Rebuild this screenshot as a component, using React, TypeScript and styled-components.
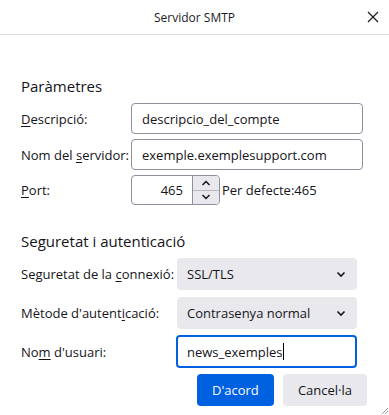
import styled, { createGlobalStyle } from 'styled-components';

const GlobalStyle = createGlobalStyle`
  html, body {
    margin: 0;
    padding: 0;
    background: #ffffff;
  }
  body {
    font-family: 'Open Sans', 'Noto Sans', sans-serif;
    color: #15141a;
  }
`;

const Dialog = styled.div`
  width: 389px;
  height: 415px;
  position: relative;
  overflow: hidden;
  background: #ffffff;
`;

const TitleBar = styled.div`
  height: 34px;
  border-bottom: 1px solid #dcdce0;
  display: flex;
  align-items: center;
  justify-content: center;
  position: relative;
  font-size: 12px;
  color: #1b1b1b;
`;

const CloseButton = styled.div`
  position: absolute;
  right: 8px;
  top: 9px;
  width: 16px;
  height: 16px;
  display: flex;
  align-items: center;
  justify-content: center;
`;

const Body = styled.div`
  padding: 41px 22px 0 21px;
  display: flex;
  flex-direction: column;
`;

const Heading = styled.div`
  font-size: 15px;
  line-height: 20px;
  margin-bottom: 7px;
`;

const Row = styled.div<{ $labelWidth: number; $mt?: number }>`
  display: flex;
  align-items: center;
  margin-top: ${(p) => p.$mt ?? 0}px;
  font-size: 13px;
  & > label {
    width: ${(p) => p.$labelWidth}px;
    flex-shrink: 0;
  }
`;

const TextBox = styled.div<{ $width: number; $focus?: boolean }>`
  box-sizing: border-box;
  width: ${(p) => p.$width}px;
  height: ${(p) => (p.$focus ? 33 : 31)}px;
  border: ${(p) => (p.$focus ? '2px solid #0061e0' : '1px solid #8f8f9d')};
  border-radius: 4px;
  padding-left: ${(p) => (p.$focus ? 9 : 10)}px;
  display: flex;
  align-items: center;
  font-size: 13px;
  background: #fff;
`;

const Caret = styled.span`
  display: inline-block;
  width: 1px;
  height: 17px;
  background: #000;
  margin-left: 1px;
`;

const PortBox = styled.div`
  box-sizing: border-box;
  width: 89px;
  height: 30px;
  border: 1px solid #8f8f9d;
  border-radius: 4px;
  display: flex;
  align-items: stretch;
  overflow: hidden;
`;

const PortValue = styled.div`
  flex: 1;
  display: flex;
  align-items: center;
  justify-content: flex-end;
  padding-right: 9px;
  font-size: 13px;
`;

const Spinner = styled.div`
  width: 26px;
  border-left: 1px solid #8f8f9d;
  display: flex;
  flex-direction: column;
  background: #e9e9ed;
`;

const SpinHalf = styled.div<{ $top?: boolean }>`
  flex: 1;
  display: flex;
  align-items: center;
  justify-content: center;
  border-bottom: ${(p) => (p.$top ? '1px solid #b8b8c0' : 'none')};
`;

const Hint = styled.span`
  margin-left: 2px;
  font-size: 13px;
`;

const Select = styled.div`
  box-sizing: border-box;
  width: 180px;
  height: 32px;
  border-radius: 4px;
  background: #e9e9ed;
  display: flex;
  align-items: center;
  justify-content: space-between;
  padding: 0 11px 0 10px;
  font-size: 13px;
`;

const Buttons = styled.div`
  display: flex;
  justify-content: flex-end;
  gap: 9px;
  margin-top: 6px;
`;

const Button = styled.div<{ $primary?: boolean }>`
  box-sizing: border-box;
  height: 32px;
  padding: 0 15px;
  min-width: 77px;
  border-radius: 4px;
  display: flex;
  align-items: center;
  justify-content: center;
  font-size: 13px;
  background: ${(p) => (p.$primary ? '#0061e0' : '#e9e9ed')};
  color: ${(p) => (p.$primary ? '#fbfbfe' : '#15141a')};
`;

const Grip = styled.svg`
  position: absolute;
  right: 0;
  bottom: 0;
`;

const U = styled.u`
  text-underline-offset: 2px;
`;

const Chevron = () => (
  <svg width="10" height="7" viewBox="0 0 10 7">
    <path d="M1.5 1.5 L5 5 L8.5 1.5" fill="none" stroke="#15141a" strokeWidth="1.6" />
  </svg>
);

const App = () => (
  <>
    <GlobalStyle />
    <Dialog>
      <TitleBar>
        Servidor SMTP
        <CloseButton>
          <svg width="12" height="12" viewBox="0 0 12 12">
            <path d="M1 1 L11 11 M11 1 L1 11" stroke="#1b1b1b" strokeWidth="1.2" />
          </svg>
        </CloseButton>
      </TitleBar>
      <Body>
        <Heading>Paràmetres</Heading>
        <Row $labelWidth={110}>
          <label>
            <U>D</U>escripció:
          </label>
          <TextBox $width={232}>descripcio_del_compte</TextBox>
        </Row>
        <Row $labelWidth={110} $mt={5}>
          <label>
            Nom del <U>s</U>ervidor:
          </label>
          <TextBox $width={232}>exemple.exemplesupport.com</TextBox>
        </Row>
        <Row $labelWidth={110} $mt={5}>
          <label>
            <U>P</U>ort:
          </label>
          <PortBox>
            <PortValue>465</PortValue>
            <Spinner>
              <SpinHalf $top>
                <svg width="10" height="6" viewBox="0 0 10 6">
                  <path d="M1.5 5 L5 1.5 L8.5 5" fill="none" stroke="#15141a" strokeWidth="1.5" />
                </svg>
              </SpinHalf>
              <SpinHalf>
                <svg width="10" height="6" viewBox="0 0 10 6">
                  <path d="M1.5 1 L5 4.5 L8.5 1" fill="none" stroke="#15141a" strokeWidth="1.5" />
                </svg>
              </SpinHalf>
            </Spinner>
          </PortBox>
          <Hint>Per defecte:465</Hint>
        </Row>
        <Heading style={{ marginTop: 26 }}>Seguretat i autenticació</Heading>
        <Row $labelWidth={156}>
          <label>
            Seguretat de la <U>c</U>onnexió:
          </label>
          <Select>
            SSL/TLS
            <Chevron />
          </Select>
        </Row>
        <Row $labelWidth={156} $mt={7}>
          <label>
            Mètode d'autent<U>i</U>cació:
          </label>
          <Select>
            Contrasenya normal
            <Chevron />
          </Select>
        </Row>
        <Row $labelWidth={155} $mt={6}>
          <label>
            No<U>m</U> d'usuari:
          </label>
          <TextBox $width={181} $focus>
            news_exemples
            <Caret />
          </TextBox>
        </Row>
        <Buttons>
          <Button $primary>D'acord</Button>
          <Button>Cancel·la</Button>
        </Buttons>
      </Body>
      <Grip width="10" height="10" viewBox="0 0 10 10">
        <path d="M9 3 L3 9 M9 6 L6 9" stroke="#9a9a9a" strokeWidth="1" />
      </Grip>
    </Dialog>
  </>
);

export default App;
